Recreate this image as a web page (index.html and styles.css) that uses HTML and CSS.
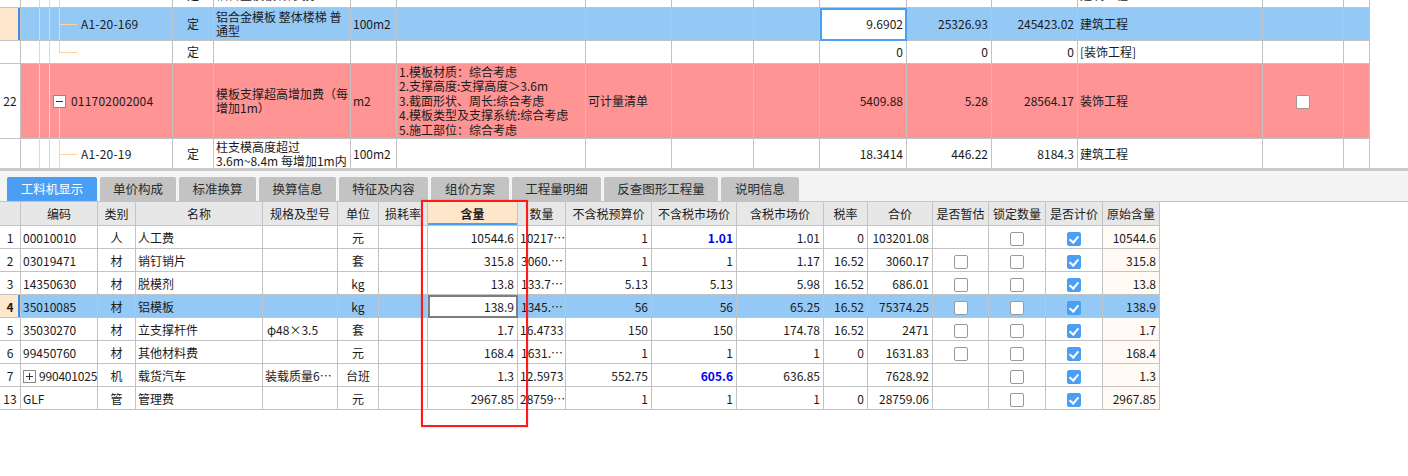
FILE: index.html
```html
<!DOCTYPE html>
<html lang="zh-CN">
<head>
<meta charset="utf-8">
<title>工料机显示</title>
<link rel="stylesheet" href="styles.css">
</head>
<body>
<div class="top">
  <table class="grid grid-top">
    <colgroup>
      <col class="w21"><col class="w152"><col class="w41"><col class="w137"><col class="w46"><col class="w189"><col class="w86"><col class="w82"><col class="w66"><col class="w87"><col class="w85"><col class="w86"><col class="w185"><col class="w81"><col class="w26">
    </colgroup>
    <tr class="r-cut">
      <td class="num"></td>
      <td class="tree t-mid"></td>
      <td class="c">定</td>
      <td>铝合金模板 梁 支撑</td>
      <td>100m2</td>
      <td></td><td></td><td></td><td></td>
      <td class="n">3.1205</td><td class="n">4630.55</td><td class="n">14449.63</td>
      <td>建筑工程</td><td></td><td></td>
    </tr>
    <tr class="r-33 sel">
      <td class="num cur"></td>
      <td class="tree t-mid"><span class="code">A1-20-169</span></td>
      <td class="c">定</td>
      <td class="name">铝合金模板 整体楼梯 普<br>通型</td>
      <td>100m2</td>
      <td></td><td></td><td></td><td></td>
      <td class="n focus-blue">9.6902</td><td class="n">25326.93</td><td class="n">245423.02</td>
      <td>建筑工程</td><td></td><td></td>
    </tr>
    <tr class="r-23">
      <td class="num"></td>
      <td class="tree t-last"></td>
      <td class="c">定</td>
      <td></td>
      <td></td>
      <td></td><td></td><td></td><td></td>
      <td class="n">0</td><td class="n">0</td><td class="n">0</td>
      <td>[装饰工程]</td><td></td><td></td>
    </tr>
    <tr class="r-75 pink">
      <td class="num">22</td>
      <td class="tree t-parent"><span class="tgl"><span class="minus"></span></span><span class="code">011702002004</span></td>
      <td class="c"></td>
      <td class="name">模板支撑超高增加费（每<br>增加1m）</td>
      <td>m2</td>
      <td class="feat">1.模板材质：综合考虑<br>2.支撑高度:支撑高度＞3.6m<br>3.截面形状、周长:综合考虑<br>4.模板类型及支撑系统:综合考虑<br>5.施工部位：综合考虑</td>
      <td>可计量清单</td><td></td><td></td>
      <td class="n">5409.88</td><td class="n">5.28</td><td class="n">28564.17</td>
      <td>装饰工程</td><td class="c"><span class="cb"></span></td><td></td>
    </tr>
    <tr class="r-31">
      <td class="num"></td>
      <td class="tree t-mid"><span class="code">A1-20-19</span></td>
      <td class="c">定</td>
      <td class="name">柱支模高度超过<br>3.6m~8.4m 每增加1m内</td>
      <td>100m2</td>
      <td></td><td></td><td></td><td></td>
      <td class="n">18.3414</td><td class="n">446.22</td><td class="n">8184.3</td>
      <td>建筑工程</td><td></td><td></td>
    </tr>
  </table>
</div>

<div class="bottom">
  <div class="tabs">
    <div class="tab active">工料机显示</div>
    <div class="tab">单价构成</div>
    <div class="tab">标准换算</div>
    <div class="tab">换算信息</div>
    <div class="tab">特征及内容</div>
    <div class="tab">组价方案</div>
    <div class="tab">工程量明细</div>
    <div class="tab">反查图形工程量</div>
    <div class="tab">说明信息</div>
  </div>

  <table class="grid grid-bot">
    <colgroup>
      <col class="w21"><col class="w77"><col class="w38"><col class="w127"><col class="w75"><col class="w41"><col class="w49"><col class="w90"><col class="w48"><col class="w86"><col class="w85"><col class="w87"><col class="w44"><col class="w65"><col class="w56"><col class="w57"><col class="w57"><col class="w57">
    </colgroup>
    <tr class="head">
      <td></td><td>编码</td><td>类别</td><td>名称</td><td>规格及型号</td><td>单位</td><td>损耗率</td><td class="hcur">含量</td><td>数量</td><td>不含税预算价</td><td>不含税市场价</td><td>含税市场价</td><td>税率</td><td>合价</td><td>是否暂估</td><td>锁定数量</td><td>是否计价</td><td>原始含量</td>
    </tr>
    <tr>
      <td class="num">1</td><td>00010010</td><td class="c">人</td><td>人工费</td><td></td><td class="c">元</td><td></td><td class="n">10544.6</td><td class="n clip">10217…</td><td class="n">1</td><td class="n hl">1.01</td><td class="n">1.01</td><td class="n">0</td><td class="n">103201.08</td><td></td><td class="c"><span class="cb"></span></td><td class="c"><span class="cb on"></span></td><td class="n orig">10544.6</td>
    </tr>
    <tr>
      <td class="num">2</td><td>03019471</td><td class="c">材</td><td>销钉销片</td><td></td><td class="c">套</td><td></td><td class="n">315.8</td><td class="n clip">3060.…</td><td class="n">1</td><td class="n">1</td><td class="n">1.17</td><td class="n">16.52</td><td class="n">3060.17</td><td class="c"><span class="cb"></span></td><td class="c"><span class="cb"></span></td><td class="c"><span class="cb on"></span></td><td class="n orig">315.8</td>
    </tr>
    <tr>
      <td class="num">3</td><td>14350630</td><td class="c">材</td><td>脱模剂</td><td></td><td class="c">kg</td><td></td><td class="n">13.8</td><td class="n clip">133.7…</td><td class="n">5.13</td><td class="n">5.13</td><td class="n">5.98</td><td class="n">16.52</td><td class="n">686.01</td><td class="c"><span class="cb"></span></td><td class="c"><span class="cb"></span></td><td class="c"><span class="cb on"></span></td><td class="n orig">13.8</td>
    </tr>
    <tr class="sel">
      <td class="num cur">4</td><td>35010085</td><td class="c">材</td><td>铝模板</td><td></td><td class="c">kg</td><td></td><td class="n focus-gray">138.9</td><td class="n clip">1345.…</td><td class="n">56</td><td class="n">56</td><td class="n">65.25</td><td class="n">16.52</td><td class="n">75374.25</td><td class="c"><span class="cb"></span></td><td class="c"><span class="cb"></span></td><td class="c"><span class="cb on"></span></td><td class="n orig">138.9</td>
    </tr>
    <tr>
      <td class="num">5</td><td>35030270</td><td class="c">材</td><td>立支撑杆件</td><td class="spec">φ48×3.5</td><td class="c">套</td><td></td><td class="n">1.7</td><td class="n clip">16.4733</td><td class="n">150</td><td class="n">150</td><td class="n">174.78</td><td class="n">16.52</td><td class="n">2471</td><td class="c"><span class="cb"></span></td><td class="c"><span class="cb"></span></td><td class="c"><span class="cb on"></span></td><td class="n orig">1.7</td>
    </tr>
    <tr>
      <td class="num">6</td><td>99450760</td><td class="c">材</td><td>其他材料费</td><td></td><td class="c">元</td><td></td><td class="n">168.4</td><td class="n clip">1631.…</td><td class="n">1</td><td class="n">1</td><td class="n">1</td><td class="n">0</td><td class="n">1631.83</td><td class="c"><span class="cb"></span></td><td class="c"><span class="cb"></span></td><td class="c"><span class="cb on"></span></td><td class="n orig">168.4</td>
    </tr>
    <tr>
      <td class="num">7</td><td class="expand"><span class="tgl small"><span class="minus"></span><span class="vbar"></span></span>990401025</td><td class="c">机</td><td>载货汽车</td><td>装载质量6…</td><td class="c">台班</td><td></td><td class="n">1.3</td><td class="n clip">12.5973</td><td class="n">552.75</td><td class="n hl">605.6</td><td class="n">636.85</td><td class="n"></td><td class="n">7628.92</td><td></td><td class="c"><span class="cb"></span></td><td class="c"><span class="cb on"></span></td><td class="n orig">1.3</td>
    </tr>
    <tr>
      <td class="num">13</td><td>GLF</td><td class="c">管</td><td>管理费</td><td></td><td class="c">元</td><td></td><td class="n">2967.85</td><td class="n clip">28759…</td><td class="n">1</td><td class="n">1</td><td class="n">1</td><td class="n">0</td><td class="n">28759.06</td><td></td><td class="c"><span class="cb"></span></td><td class="c"><span class="cb on"></span></td><td class="n orig">2967.85</td>
    </tr>
  </table>

  <div class="mark"></div>
</div>
</body>
</html>
```

FILE: styles.css
```css
:root {
  --grid: #c3c3c3;
  --blue-row: #94c9f6;
  --pink: #ff9494;
  --peach: #ffe7cb;
  --accent: #4a9ff5;
  --tree: #ffd39c;
  --ink: #1b1b1b;
}

* { box-sizing: border-box; }

html, body {
  margin: 0;
  padding: 0;
  background: #fff;
}

body {
  font-family: "Noto Sans CJK SC", "Noto Sans", sans-serif;
  font-size: 12px;
  color: var(--ink);
  width: 1408px;
  height: 476px;
  overflow: hidden;
}

/* ---------- generic grid ---------- */
.grid {
  border-collapse: separate;
  border-spacing: 0;
  table-layout: fixed;
}
.grid td {
  border-right: 1px solid var(--grid);
  border-bottom: 1px solid var(--grid);
  padding: 0 3px 0 2px;
  white-space: nowrap;
  overflow: hidden;
  vertical-align: middle;
}
.grid td.c { text-align: center; padding: 0; }
.grid td.n { text-align: right; }
.grid td.num { text-align: center; padding: 0; background: #fff; }
.grid td.num.cur {
  background: var(--peach);
  box-shadow: inset -2px 0 0 #3d8ef0;
  font-weight: bold;
}

.w21 { width: 21px; } .w26 { width: 26px; } .w38 { width: 38px; }
.w41 { width: 41px; } .w44 { width: 44px; } .w46 { width: 46px; }
.w48 { width: 48px; } .w49 { width: 49px; } .w56 { width: 56px; }
.w57 { width: 57px; } .w65 { width: 65px; } .w66 { width: 66px; }
.w75 { width: 75px; } .w77 { width: 77px; } .w81 { width: 81px; }
.w82 { width: 82px; } .w85 { width: 85px; } .w86 { width: 86px; }
.w87 { width: 87px; } .w90 { width: 90px; } .w127 { width: 127px; }
.w137 { width: 137px; } .w152 { width: 152px; } .w185 { width: 185px; }
.w189 { width: 189px; }

/* ---------- top pane ---------- */
.top {
  overflow: hidden;
  border-bottom: 3px solid #cacaca;
  height: 171px;
}
.grid-top {
  width: 1370px;
  margin-top: -16px;
  line-height: 14.5px;
}
.grid-top tr.r-cut { height: 24px; }
.grid-top tr.r-33 { height: 33px; }
.grid-top tr.r-23 { height: 23px; }
.grid-top tr.r-75 { height: 75px; }
.grid-top tr.r-31 { height: 31px; }

.grid-top td.name { white-space: nowrap; padding-right: 0; }
.grid-top td.feat { white-space: nowrap; padding-left: 2px; }

.grid tr.sel td { background-color: var(--blue-row); }
.grid tr.pink td { background-color: var(--pink); }
.grid tr.pink td.num { background-color: #fff; }
.grid tr.sel td.num.cur { background-color: var(--peach); }

.focus-blue {
  background-color: #fff !important;
  outline: 2px solid var(--accent);
  outline-offset: -2px;
}
.focus-gray {
  background-color: #fff !important;
  outline: 2px solid #7d7d7d;
  outline-offset: -2px;
}

/* tree lines */
.tree {
  background-repeat: no-repeat;
  padding-left: 60px !important;
}
.tree.t-mid {
  background-image:
    linear-gradient(var(--tree), var(--tree)),
    linear-gradient(var(--tree), var(--tree)),
    linear-gradient(var(--tree), var(--tree)),
    linear-gradient(var(--tree), var(--tree));
  background-position: 18px 0, 28px 0, 38px 0, 38px 50%;
  background-size: 1px 100%, 1px 100%, 1px 100%, 18px 1px;
}
.tree.t-last {
  background-image:
    linear-gradient(var(--tree), var(--tree)),
    linear-gradient(var(--tree), var(--tree)),
    linear-gradient(var(--tree), var(--tree)),
    linear-gradient(var(--tree), var(--tree));
  background-position: 18px 0, 28px 0, 38px 0, 38px 50%;
  background-size: 1px 100%, 1px 100%, 1px 50%, 18px 1px;
}
.tree.t-parent {
  padding-left: 32px !important;
  background-image:
    linear-gradient(var(--tree), var(--tree)),
    linear-gradient(var(--tree), var(--tree)),
    linear-gradient(var(--tree), var(--tree));
  background-position: 18px 0, 28px 0, 38px 100%;
  background-size: 1px 100%, 1px 100%, 1px 50%;
}
.code { letter-spacing: 0.2px; }

.tgl {
  position: relative;
  display: inline-block;
  width: 13px;
  height: 13px;
  border: 1px solid #8a8a8a;
  background: #fff;
  vertical-align: -2px;
  margin-right: 5px;
}
.tgl .minus {
  position: absolute;
  left: 2px;
  right: 2px;
  top: 5px;
  height: 1px;
  background: #333;
}
.tgl .vbar {
  position: absolute;
  top: 2px;
  bottom: 2px;
  left: 5px;
  width: 1px;
  background: #333;
}
.tgl.small { width: 13px; height: 13px; margin-right: 3px; }
.grid td.expand { padding-left: 2px; padding-right: 0; letter-spacing: -0.2px; }

/* checkbox */
.cb {
  display: inline-block;
  width: 14px;
  height: 14px;
  border: 1px solid #999;
  border-radius: 2px;
  background: #fff;
  vertical-align: middle;
  position: relative;
}
.cb.on {
  background: var(--accent);
  border-color: var(--accent);
}
.cb.on::after {
  content: "";
  position: absolute;
  left: 3px;
  top: 1px;
  width: 4px;
  height: 7px;
  border-right: 2px solid #fff;
  border-bottom: 2px solid #fff;
  transform: rotate(40deg);
}

/* ---------- bottom pane ---------- */
.bottom {
  position: relative;
}
.tabs {
  background: #f4f4f4;
  border-bottom: 1px solid #c3c3c3;
  padding: 6px 0 0 7px;
  display: grid;
  grid-template-columns: 90px 76px 77px 77px 89px 78px 89px 114px 78px;
  column-gap: 3px;
  height: 31px;
}
.tab {
  height: 24px;
  line-height: 24px;
  text-align: center;
  background: #c3c3c3;
  color: #2b2b2b;
  border-radius: 2px 2px 0 0;
  font-size: 12.5px;
}
.tab.active {
  background: var(--accent);
  color: #fff;
}

.grid-bot {
  width: 1160px;
}
.grid-bot tr { height: 23px; }
.grid-bot tr.head { height: 24px; }
.grid-bot tr.head td {
  background: #e7e7e7;
  text-align: center;
  padding: 0;
}
.grid-bot tr.head td.hcur {
  background: #fde6c9;
  font-weight: bold;
  box-shadow: inset 0 -2px 0 var(--accent);
}
.grid-bot td.n { padding-right: 3px; }
.grid-bot td.clip { text-align: right; padding-right: 2px; padding-left: 2px; }
.grid-bot td.hl { color: #0000f0; font-weight: bold; }
.grid-bot td.orig { background: #fffaf4; }
.grid-bot tr.sel td.orig { background: var(--blue-row); }
.grid-bot td.spec { padding-left: 4px; }

/* annotation frame */
.mark {
  position: absolute;
  left: 421px;
  top: 29px;
  width: 107px;
  height: 227px;
  border: 2px solid #ff1a1a;
  box-shadow: 0 0 1px rgba(255, 0, 0, 0.6);
  pointer-events: none;
}
```
